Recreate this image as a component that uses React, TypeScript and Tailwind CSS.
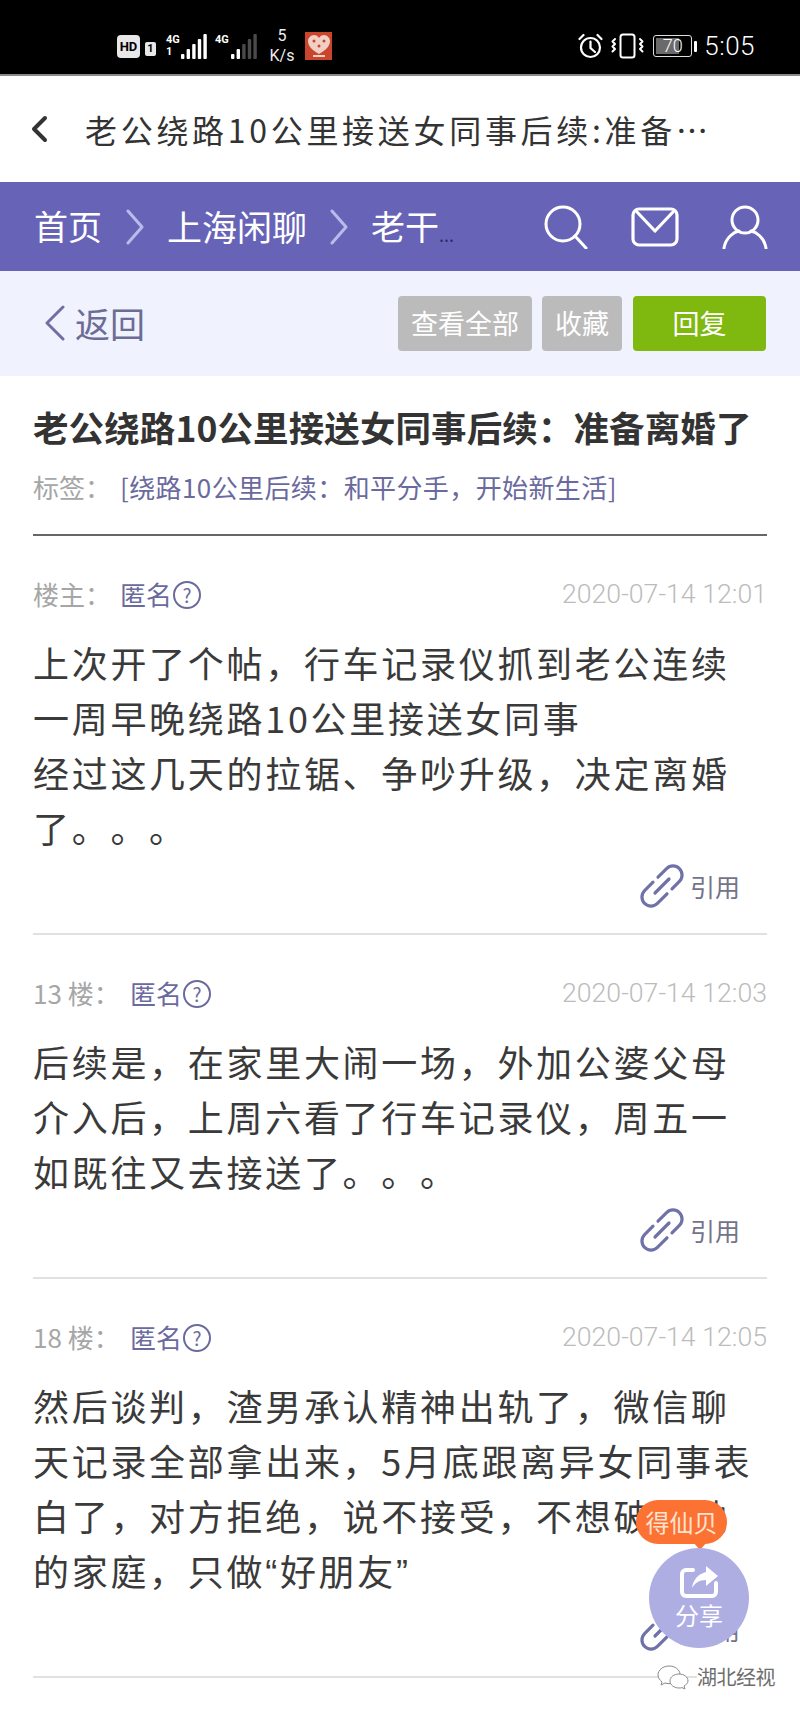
import React from 'react';

const CJK = { fontFamily: '"Noto Sans CJK SC", "Noto Sans", sans-serif' };
const ROBOTO = { fontFamily: 'Roboto, "Noto Sans CJK SC", sans-serif' };
const LATIN = { fontFamily: '"Liberation Sans", sans-serif' };

interface Post {
  floor: string;
  floorGap: string;
  date: string;
  lines: React.ReactNode[];
}

const posts: Post[] = [
  {
    floor: '楼主：',
    floorGap: 'w-[87px]',
    date: '2020-07-14 12:01',
    lines: [
      '上次开了个帖，行车记录仪抓到老公连续',
      '一周早晚绕路10公里接送女同事',
      '经过这几天的拉锯、争吵升级，决定离婚',
      '了。。。',
    ],
  },
  {
    floor: '13 楼：',
    floorGap: 'w-[97px]',
    date: '2020-07-14 12:03',
    lines: [
      '后续是，在家里大闹一场，外加公婆父母',
      '介入后，上周六看了行车记录仪，周五一',
      '如既往又去接送了。。。',
    ],
  },
  {
    floor: '18 楼：',
    floorGap: 'w-[97px]',
    date: '2020-07-14 12:05',
    lines: [
      '然后谈判，渣男承认精神出轨了，微信聊',
      '天记录全部拿出来，5月底跟离异女同事表',
      '白了，对方拒绝，说不接受，不想破坏她',
      <>
        的家庭，只做<span className="leading-none" style={LATIN}>“</span>好朋友<span className="leading-none" style={LATIN}>”</span>
      </>,
    ],
  },
];

const SignalBars = ({ lit }: { lit: number }) => (
  <svg width="28" height="26" viewBox="0 0 28 26">
    {[0, 1, 2, 3, 4].map((i) => (
      <rect
        key={i}
        x={i * 5.6 + 1}
        y={21 - i * 5}
        width="3.4"
        height={5 + i * 5}
        rx="1"
        fill={i < lit ? '#ffffff' : '#4a4a4a'}
      />
    ))}
  </svg>
);

const StatusBar = () => (
  <div className="h-[76px] pt-[18px] bg-black border-b-2 border-[#8a8a8a] flex items-center justify-between pl-[117px] pr-[45px] text-white" style={ROBOTO}>
    <div className="flex items-center">
      <span className="w-[23px] h-[23px] rounded-[4px] bg-[#e8e8e8] text-black text-[13px] font-bold leading-[23px] text-center">HD</span>
      <span className="ml-[5px] w-[11px] h-[14px] mt-[6px] rounded-[2px] bg-[#e8e8e8] text-black text-[11px] font-bold leading-[14px] text-center">1</span>
      <div className="ml-[10px] w-[14px] flex flex-col text-[11px] font-bold leading-[12px]">
        <span>4G</span>
        <span>1</span>
      </div>
      <SignalBars lit={5} />
      <span className="ml-[7px] w-[15px] text-[11px] font-bold leading-[12px] -mt-[13px]">4G</span>
      <SignalBars lit={2} />
      <div className="ml-[9px] w-[30px] flex flex-col items-center text-[16px] leading-[20px] text-[#eeeeee]">
        <span>5</span>
        <span>K/s</span>
      </div>
      <div className="ml-[8px] w-[27px] h-[28px] bg-[#c9452e] flex items-center justify-center">
        <svg width="24" height="24" viewBox="0 0 24 24">
          <path d="M12 20C5 16 1 12 1 7c0-3 3-6 6-6 2 0 4 1 5 3 1-2 3-3 5-3 3 0 6 3 6 6 0 5-4 9-11 13z" fill="#f0cfc4" />
          <circle cx="7" cy="7" r="1.500" fill="#c9452e" />
          <circle cx="17" cy="7" r="1.500" fill="#c9452e" />
          <circle cx="12" cy="12" r="1.500" fill="#c9452e" />
          <rect x="6" y="21" width="12" height="2" fill="#f0cfc4" />
        </svg>
      </div>
    </div>
    <div className="flex items-center">
      <svg width="25" height="26" viewBox="0 0 25 26" fill="none" stroke="#ffffff" strokeWidth="2.2" strokeLinecap="round">
        <circle cx="12.5" cy="14.5" r="9.5" />
        <path d="M12.5 8.500v6.500l4.500 4M1.500 6l4-4M23.500 6l-4-4" />
      </svg>
      <svg className="ml-[8px]" width="33" height="26" viewBox="0 0 33 26" fill="none" stroke="#ffffff" strokeWidth="2" strokeLinecap="round" strokeLinejoin="round">
        <rect x="9.5" y="1.5" width="14" height="23" rx="2.5" />
        <path d="M4 6l-2.500 2.500L4 11 1.500 13.500 4 16l-2.500 2.500M29 6l2.500 2.500L29 11l2.500 2.500L29 16l2.500 2.500" />
      </svg>
      <div className="relative ml-[9px] w-[39px] h-[22px] rounded-[3px] border border-[#dddddd] p-[2px]">
        <div className="h-full w-[70%] bg-[#6a6a6a]" />
        <span className="absolute inset-0 text-center text-[18px] leading-[20px] font-light">70</span>
      </div>
      <span className="ml-[2px] w-[3px] h-[11px] bg-white rounded-[1px]" />
      <span className="ml-[7px] text-[26px] leading-none font-light tracking-[0.5px]">5:05</span>
    </div>
  </div>
);

const TopTitle = () => (
  <div className="h-[106px] bg-white flex items-center pl-[29px]" style={CJK}>
    <svg width="20" height="30" viewBox="0 0 20 30" fill="none" stroke="#333333" strokeWidth="4" strokeLinecap="round" strokeLinejoin="round">
      <path d="M16 4L5 15l11 11" />
    </svg>
    <span className="ml-[36px] text-[32px] leading-none text-[#333333] tracking-[3.7px] whitespace-nowrap">老公绕路10公里接送女同事后续:准备…</span>
  </div>
);

const Crumb = () => (
  <svg width="20" height="36" viewBox="0 0 20 36" fill="none" stroke="#b9bbea" strokeWidth="3" strokeLinecap="round" strokeLinejoin="round">
    <path d="M3 2l14 16L3 34" />
  </svg>
);

const NavBar = () => (
  <div className="h-[89px] bg-[#6764b8] flex items-center pl-[34px] text-white" style={CJK}>
    <span className="-mt-[2px] text-[34px] leading-none">首页</span>
    <span className="ml-[23px]"><Crumb /></span>
    <span className="-mt-[2px] ml-[22px] text-[35px] leading-none whitespace-nowrap">上海闲聊</span>
    <span className="ml-[22px]"><Crumb /></span>
    <span className="-mt-[2px] ml-[22px] text-[34px] leading-none whitespace-nowrap">老干</span>
    <span className="mt-[14px] text-[18px] leading-none text-[#2d2b66]">...</span>
    <svg className="ml-[90px]" width="44" height="44" viewBox="0 0 44 44" fill="none" stroke="#ffffff" strokeWidth="3" strokeLinecap="round">
      <circle cx="19" cy="19" r="17" />
      <path d="M31 31l11 12" />
    </svg>
    <svg className="ml-[43px]" width="48" height="40" viewBox="0 0 48 40" fill="none" stroke="#ffffff" strokeWidth="3.2" strokeLinecap="round" strokeLinejoin="round">
      <rect x="2" y="2" width="44" height="36" rx="6" />
      <path d="M6 5l18 19L42 5" />
    </svg>
    <svg className="ml-[43px]" width="46" height="44" viewBox="0 0 46 44" fill="none" stroke="#ffffff" strokeWidth="3" strokeLinecap="round">
      <circle cx="23" cy="15" r="13" />
      <path d="M2 43c2-11 10-16 15-17M44 43c-2-11-10-16-15-17" />
    </svg>
  </div>
);

const ActionBar = () => (
  <div className="h-[105px] bg-[#f0f3fd] flex items-center pl-[44px] pr-[34px]" style={CJK}>
    <svg className="-mt-[2px]" width="22" height="36" viewBox="0 0 22 36" fill="none" stroke="#6f6fa6" strokeWidth="3" strokeLinecap="round" strokeLinejoin="round">
      <path d="M19 2L3 18l16 16" />
    </svg>
    <span className="-mt-[3px] ml-[9px] text-[35px] leading-none text-[#6c6c96]">返回</span>
    <div className="ml-auto flex items-center text-[27px] text-white">
      <span className="w-[134px] h-[55px] rounded-[4px] bg-[#bbbbbb] flex items-center justify-center">查看全部</span>
      <span className="ml-[10px] w-[80px] h-[55px] rounded-[4px] bg-[#bbbbbb] flex items-center justify-center">收藏</span>
      <span className="ml-[11px] w-[133px] h-[55px] rounded-[4px] bg-[#7fb80e] flex items-center justify-center">回复</span>
    </div>
  </div>
);

const QuoteLink = () => (
  <div className="flex items-center justify-end h-[50px] pr-[27px]">
    <svg className="-ml-[3px]" width="44" height="44" viewBox="0 0 44 44" fill="none" stroke="#6f72a8" strokeWidth="3.2" strokeLinecap="round" strokeLinejoin="round">
      <path d="M32 24.800l7.400-7.400a9 9 0 0 0-12.800-12.800L18 13.200" />
      <path d="M13 18.200l-8.400 8.400a9 9 0 0 0 12.800 12.800L27 29.800" />
      <path d="M15 29L29 15" />
    </svg>
    <span className="ml-[6px] text-[25px] leading-none text-[#73738a]">引用</span>
  </div>
);

const PostBlock = ({ post }: { post: Post }) => (
  <div className="mx-[33px] pt-[40px] pb-[22px] flex flex-col border-b-2 border-[#e1e1e1] shrink-0">
    <div className="flex items-center h-[36px] text-[26px] leading-none">
      <span className={`${post.floorGap} text-[#a6a6a6] whitespace-nowrap`}>{post.floor}</span>
      <span className="text-[#6a6a9e]">匿名</span>
      <span className="ml-[1px] mt-[2px] w-[28px] h-[28px] rounded-full border-2 border-[#6a6a9e] text-[#6a6a9e] text-[19px] leading-[24px] text-center">?</span>
      <span className="ml-auto text-[26.7px] text-[#bcbcbc] font-light" style={ROBOTO}>{post.date}</span>
    </div>
    <div className="mt-[23px] text-[36px] leading-[55px] text-[#3a3a3a] tracking-[2.7px] whitespace-nowrap [text-spacing-trim:space-all]">
      {post.lines.map((line, i) => (
        <div key={i}>{line}</div>
      ))}
    </div>
    <div className="mt-[6px]">
      <QuoteLink />
    </div>
  </div>
);

const ShareButton = () => (
  <div className="absolute left-[636px] top-[1500px] w-[113px] h-[148px]" style={CJK}>
    <div className="w-[91px] h-[44px] rounded-[22px] bg-[#fb7232] text-[#ffe3d2] text-[24px] leading-[44px] text-center">得仙贝</div>
    <div className="absolute left-[57px] top-[42px] w-0 h-0 border-x-[7px] border-x-transparent border-t-[8px] border-t-[#fb7232]" />
    <div className="absolute left-[13px] top-[48px] w-[100px] h-[100px] rounded-full bg-[#aeaee3] flex flex-col items-center text-white">
      <svg className="mt-[17px]" width="40" height="34" viewBox="0 0 40 34">
        <path d="M14 5H7a4 4 0 0 0-4 4v18a4 4 0 0 0 4 4h26a4 4 0 0 0 4-4v-9" fill="none" stroke="#ffffff" strokeWidth="4" strokeLinecap="round" />
        <path d="M27 1l12 10-12 10v-6c-7 0-11 3-14 8 1-8 6-14 14-16z" fill="#ffffff" />
      </svg>
      <span className="mt-[4px] text-[24px] leading-none">分享</span>
    </div>
  </div>
);

const Watermark = () => (
  <div className="absolute left-[657px] top-[1664px] flex items-center" style={CJK}>
    <svg width="32" height="26" viewBox="0 0 32 26" fill="#ffffff" stroke="#8a8a8a" strokeWidth="1">
      <path d="M12 2C6 2 1 6 1 11c0 3 2 5 4 7l-1 3 4-2c1 .4 3 .6 4 .6 6 0 11-4 11-9S18 2 12 2z" />
      <path d="M22 10c-5 0-9 3-9 7s4 7 9 7c1 0 2 0 3-.4l3 1.400-1-3c2-1 4-3 4-5 0-4-4-7-9-7z" />
    </svg>
    <span className="ml-[8px] text-[20px] leading-[26px] text-[#6e6e6e] tracking-[-0.5px] bg-white">湖北经视</span>
  </div>
);

export default function App() {
  return (
    <div className="relative w-[800px] h-[1711px] overflow-hidden bg-white flex flex-col" style={CJK}>
      <StatusBar />
      <TopTitle />
      <NavBar />
      <ActionBar />
      <div className="mx-[33px] h-[160px] border-b-2 border-[#666666] shrink-0">
        <div className="mt-[28px] text-[35.5px] leading-[46px] font-bold text-[#333333] tracking-[0.1px] whitespace-nowrap">老公绕路10公里接送女同事后续：准备离婚了</div>
        <div className="mt-[19px] flex text-[26px] leading-[36px] whitespace-nowrap">
          <span className="w-[87px] text-[#a6a6a6]">标签：</span>
          <span className="text-[#6a6a9e] tracking-[0.4px]">[绕路10公里后续：和平分手，开始新生活]</span>
        </div>
      </div>
      {posts.map((post) => (
        <PostBlock key={post.date} post={post} />
      ))}
      <ShareButton />
      <Watermark />
    </div>
  );
}
